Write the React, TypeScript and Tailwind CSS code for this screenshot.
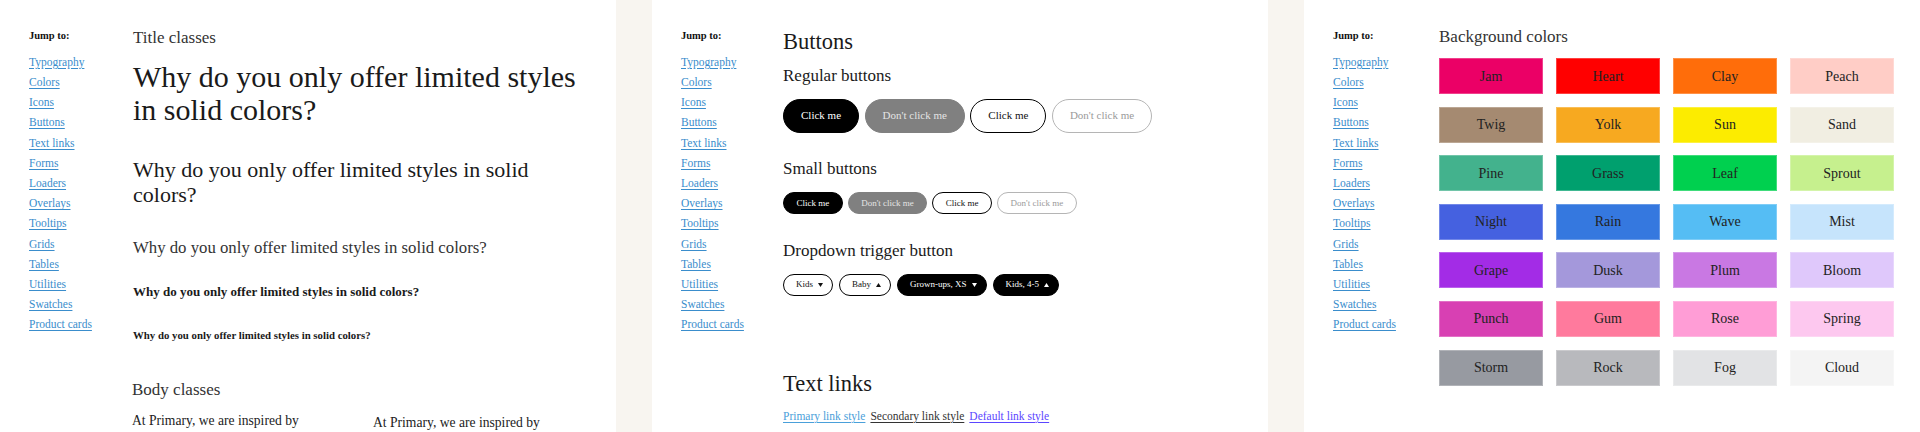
import React from "react";

const NAV_LINKS = [
  "Typography",
  "Colors",
  "Icons",
  "Buttons",
  "Text links",
  "Forms",
  "Loaders",
  "Overlays",
  "Tooltips",
  "Grids",
  "Tables",
  "Utilities",
  "Swatches",
  "Product cards",
];

const SWATCHES: { name: string; bg: string }[] = [
  { name: "Jam", bg: "bg-[#eb0066]" },
  { name: "Heart", bg: "bg-[#ff0000]" },
  { name: "Clay", bg: "bg-[#ff6d0a]" },
  { name: "Peach", bg: "bg-[#ffcdc6]" },
  { name: "Twig", bg: "bg-[#a58a71]" },
  { name: "Yolk", bg: "bg-[#f7a920]" },
  { name: "Sun", bg: "bg-[#fcec00]" },
  { name: "Sand", bg: "bg-[#f1eee2]" },
  { name: "Pine", bg: "bg-[#43b28d]" },
  { name: "Grass", bg: "bg-[#00a06e]" },
  { name: "Leaf", bg: "bg-[#00d04f]" },
  { name: "Sprout", bg: "bg-[#c6f08e]" },
  { name: "Night", bg: "bg-[#4561e0]" },
  { name: "Rain", bg: "bg-[#3578df]" },
  { name: "Wave", bg: "bg-[#55bdf4]" },
  { name: "Mist", bg: "bg-[#c6e4fc]" },
  { name: "Grape", bg: "bg-[#a32ce6]" },
  { name: "Dusk", bg: "bg-[#a498db]" },
  { name: "Plum", bg: "bg-[#c978e3]" },
  { name: "Bloom", bg: "bg-[#dfc8fb]" },
  { name: "Punch", bg: "bg-[#d840b3]" },
  { name: "Gum", bg: "bg-[#ff7a9d]" },
  { name: "Rose", bg: "bg-[#ff9dd6]" },
  { name: "Spring", bg: "bg-[#fdc8ef]" },
  { name: "Storm", bg: "bg-[#979aa1]" },
  { name: "Rock", bg: "bg-[#b8b9bd]" },
  { name: "Fog", bg: "bg-[#e2e3e5]" },
  { name: "Cloud", bg: "bg-[#f4f4f4]" },
];

const JumpNav = ({ width }: { width: string }) => (
  <nav className={`${width} shrink-0`}>
    <div className="mt-[25.7px] text-[10.5px] leading-[20px] font-bold text-[#111]">
      Jump to:
    </div>
    <ul className="mt-[6px]">
      {NAV_LINKS.map((link) => (
        <li key={link} className="text-[11.5px] leading-[20.2px]">
          <a href="#" className="text-[#3a8dcc] underline underline-offset-2">
            {link}
          </a>
        </li>
      ))}
    </ul>
  </nav>
);

const Triangle = ({ up }: { up?: boolean }) => (
  <svg width="5" height="4" viewBox="0 0 5 4" className="shrink-0">
    <polygon points={up ? "0,4 5,4 2.5,0" : "0,0 5,0 2.5,4"} fill="currentColor" />
  </svg>
);

type BtnVariant = "solid" | "muted" | "outline" | "ghost";

const VARIANTS: Record<BtnVariant, string> = {
  solid: "bg-black border-black text-white",
  muted: "bg-[#808080] border-[#808080] text-[#e4e4e4]",
  outline: "bg-white border-black text-[#111]",
  ghost: "bg-white border-[#b5b5b5] text-[#9a9a9a]",
};

const Button = ({
  label,
  variant,
  small,
}: {
  label: string;
  variant: BtnVariant;
  small?: boolean;
}) => (
  <button
    className={`${VARIANTS[variant]} rounded-full border ${
      small ? "h-[22px] px-[12.5px] text-[9px]" : "h-[34px] px-[17px] text-[11px]"
    } leading-none whitespace-nowrap`}
  >
    {label}
  </button>
);

const Dropdown = ({ label, dark, up }: { label: string; dark?: boolean; up?: boolean }) => (
  <button
    className={`flex items-center gap-[5px] h-[22px] pl-[12px] pr-[9px] rounded-full border text-[9px] leading-none whitespace-nowrap ${
      dark ? "bg-black border-black text-white" : "bg-white border-black text-[#111]"
    }`}
  >
    <span>{label}</span>
    <Triangle up={up} />
  </button>
);

const TypographyPanel = () => (
  <section className="w-[616px] h-full bg-white flex pl-[29px] shrink-0">
    <JumpNav width="w-[104px]" />
    <div className="w-[455px] text-[#1a1a1a]">
      <h2 className="mt-[25.5px] text-[17px] leading-[24px] text-[#333]">Title classes</h2>
      <h1 className="mt-[10.5px] text-[30px] leading-[33px]">
        Why do you only offer limited styles in solid colors?
      </h1>
      <h2 className="mt-[31px] text-[22px] leading-[25px]">
        Why do you only offer limited styles in solid colors?
      </h2>
      <h3 className="mt-[28.7px] text-[16.75px] leading-[24px] text-[#333]">
        Why do you only offer limited styles in solid colors?
      </h3>
      <h4 className="mt-[23.6px] text-[13px] leading-[18px] font-bold">
        Why do you only offer limited styles in solid colors?
      </h4>
      <h5 className="mt-[25.4px] text-[10.8px] leading-[16px] font-bold">
        Why do you only offer limited styles in solid colors?
      </h5>
      <h2 className="mt-[35.5px] -ml-px text-[17px] leading-[24px] text-[#333]">Body classes</h2>
      <div className="mt-[8.6px] -ml-px grid grid-cols-[220px_220px] gap-x-[21px] text-[13.6px] leading-[19px] text-[#222]">
        <p>
          At Primary, we are inspired by simplicity. Instead of chasing trends and gimmicks, we
          focus on the essentials.
        </p>
        <p className="mt-[2px]">
          At Primary, we are inspired by simplicity. Instead of chasing trends and gimmicks, we
          focus on the essentials.
        </p>
      </div>
    </div>
  </section>
);

const ButtonsPanel = () => (
  <section className="w-[616px] h-full bg-white flex pl-[29px] shrink-0">
    <JumpNav width="w-[102px]" />
    <div className="text-[#1a1a1a]">
      <h1 className="mt-[26.7px] text-[22.5px] leading-[30px]">Buttons</h1>
      <h2 className="mt-[7.3px] text-[17px] leading-[24px]">Regular buttons</h2>
      <div className="mt-[11px] flex gap-[5.5px]">
        <Button label="Click me" variant="solid" />
        <Button label="Don't click me" variant="muted" />
        <Button label="Click me" variant="outline" />
        <Button label="Don't click me" variant="ghost" />
      </div>
      <h2 className="mt-[24px] text-[17px] leading-[24px]">Small buttons</h2>
      <div className="mt-[11.3px] flex gap-[5px]">
        <Button label="Click me" variant="solid" small />
        <Button label="Don't click me" variant="muted" small />
        <Button label="Click me" variant="outline" small />
        <Button label="Don't click me" variant="ghost" small />
      </div>
      <h2 className="mt-[24.7px] text-[17px] leading-[24px]">Dropdown trigger button</h2>
      <div className="mt-[11px] flex gap-[6px]">
        <Dropdown label="Kids" />
        <Dropdown label="Baby" up />
        <Dropdown label="Grown-ups, XS" dark />
        <Dropdown label="Kids, 4-5" dark up />
      </div>
      <h1 className="mt-[73px] text-[22.5px] leading-[30px]">Text links</h1>
      <div className="mt-[9px] flex gap-[5px] text-[11.5px] leading-[16px]">
        <a href="#" className="text-[#4aa0da] underline underline-offset-2">
          Primary link style
        </a>
        <a href="#" className="text-[#333] underline underline-offset-2">
          Secondary link style
        </a>
        <a href="#" className="text-[#5b46ff] underline underline-offset-2">
          Default link style
        </a>
      </div>
    </div>
  </section>
);

const ColorsPanel = () => (
  <section className="w-[616px] h-full bg-white flex pl-[29px] shrink-0">
    <JumpNav width="w-[106px]" />
    <div className="text-[#1a1a1a]">
      <h2 className="mt-[25px] text-[17px] leading-[24px] text-[#333]">Background colors</h2>
      <div className="mt-[9px] grid grid-cols-[repeat(4,104px)] gap-x-[13px] gap-y-[12.6px]">
        {SWATCHES.map((s) => (
          <div
            key={s.name}
            className={`${s.bg} h-[36px] border border-white/25 flex items-center justify-center text-[14px] text-[#222]`}
          >
            {s.name}
          </div>
        ))}
      </div>
    </div>
  </section>
);

export default function App() {
  return (
    <div className="flex gap-[36px] w-[1920px] h-[432px] overflow-hidden bg-[#f8f5f0] font-['Liberation_Serif',serif]">
      <TypographyPanel />
      <ButtonsPanel />
      <ColorsPanel />
    </div>
  );
}
